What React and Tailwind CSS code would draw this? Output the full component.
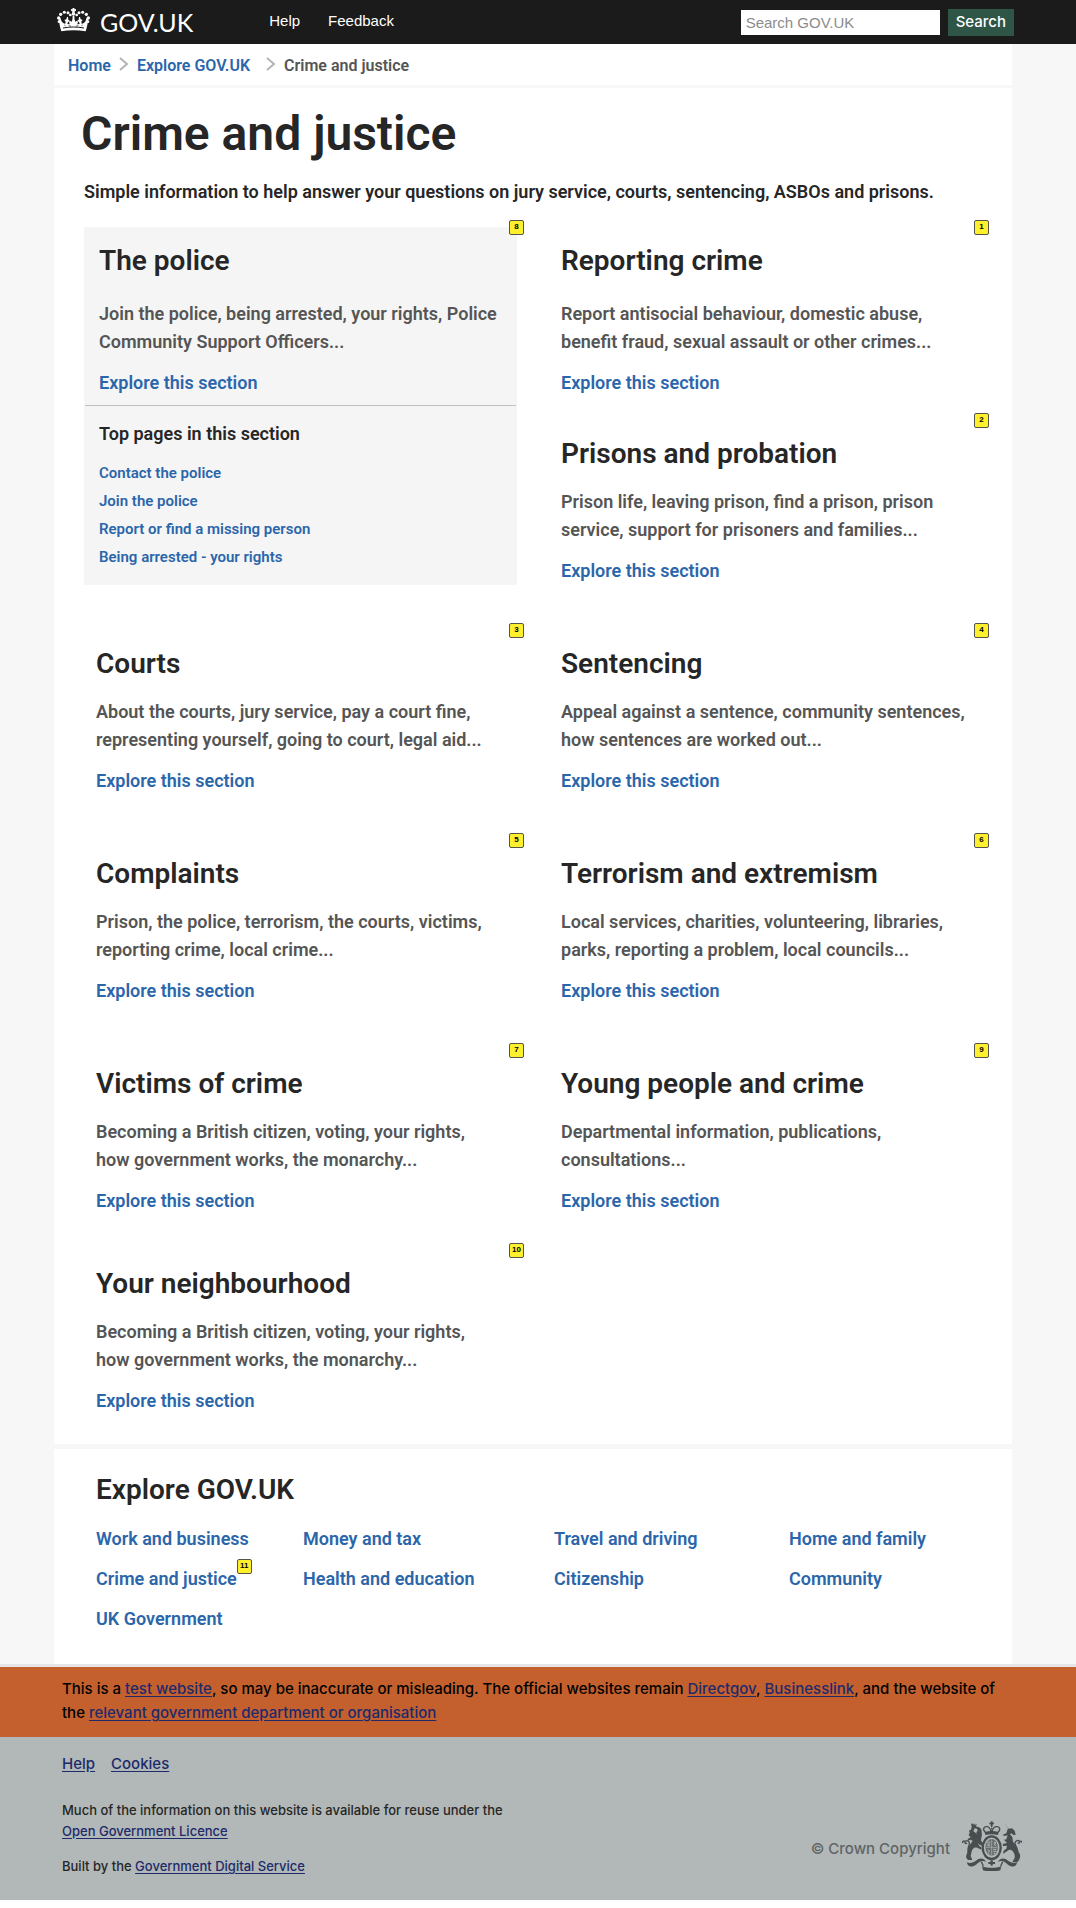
import React from "react";

const LINK = "text-[#2b66ab] hover:underline";
const FOOTER_LINK = "text-[#1d2a6b] underline underline-offset-2";

function Crown() {
  return (
    <svg className="h-6 w-[33px]" viewBox="0 0 99 72" fill="#fff" aria-hidden="true">
      <path d="M47 0h5l1 4 4-1v6l-4-1 1 6h-9l1-6-4 1V3l4 1z" />
      <circle cx="49.500" cy="18" r="5.500" />
      <circle cx="33" cy="14" r="4.500" />
      <circle cx="22" cy="12.500" r="4.500" />
      <circle cx="11" cy="19" r="5" />
      <circle cx="5" cy="30" r="5" />
      <circle cx="6" cy="41" r="4" />
      <circle cx="40" cy="21" r="4" />
      <circle cx="66" cy="14" r="4.500" />
      <circle cx="77" cy="12.500" r="4.500" />
      <circle cx="88" cy="19" r="5" />
      <circle cx="94" cy="30" r="5" />
      <circle cx="93" cy="41" r="4" />
      <circle cx="59" cy="21" r="4" />
      <path d="M47 24h5l1 12 3 6 3-4 4 4-2 7 7-1-2-6-6-3 5-4 1-8h3l2 7 6 2-4 5 1 6c6-1 9-4 12-9l3-9 4 3c0 13-3 25-7 38-23-4-50-4-73 0C9 57 6 45 6 32l4-3 3 9c3 5 6 8 12 9l1-6-4-5 6-2 2-7h3l1 8 5 4-6 3-2 6 7 1-2-7 4-4 3 4 3-6z" />
      <path d="M18 60c20-4 43-4 63 0" stroke="#1b1b1b" strokeWidth="3" fill="none" />
      <path d="M35 52l7 3M64 52l-7 3M22 51l4 3M77 51l-4 3" stroke="#1b1b1b" strokeWidth="2" />
    </svg>
  );
}

function RoyalArms() {
  return (
    <svg className="h-[50px] w-[60px]" viewBox="0 0 180 150" fill="#484d4f" aria-hidden="true">
      {/* central crown */}
      <path d="M86 1h6v4h4v5h-4v5h-6v-5h-4V5h4z" />
      <g fill="none" stroke="#484d4f" strokeWidth="4">
        <path d="M70 34C60 24 66 15 76 17c8 2 10 8 11 16M108 34c10-10 4-19-6-17-8 2-11 8-12 16" />
        <path d="M89 15v20" strokeDasharray="4 2" />
      </g>
      <path d="M68 33c14-4 28-4 42 0l-2 9c-12-3-26-3-38 0z" />
      {/* shield and garter */}
      <ellipse cx="89" cy="80" rx="27" ry="34" fill="none" stroke="#484d4f" strokeWidth="7" />
      <ellipse cx="89" cy="79" rx="19" ry="25" fill="#676c6d" />
      <path d="M89 55v48M71 79h36" stroke="#b2b8b7" strokeWidth="2" />
      <path d="M76 63h9M75 69h10M76 74h8M94 85h9M94 91h9M95 97h5M77 86l6 4-5 5 5 5M95 63l7 3-6 4 6 4" stroke="#b2b8b7" strokeWidth="3" fill="none" />
      {/* lion */}
      <path d="M27 12l3-6 4 5 3-4 2 5 5-3-2 9H30z" />
      <path d="M28 19c10-5 26-3 30 6 2 5 0 10 2 15l-3 17c3 9 7 10 11 9l-4 7c-8 2-13-1-15-7-1 6 4 10 8 13l2 7-7-3c-9-4-14-6-20 2-4 6-4 13-6 20l5 12h-13c-5-5-7-10-5-14 4-8 3-15 6-22 2-8 9-15 13-21l-6-4-8 3-1-5 9-5-6-6 3-8-2-6 7-4z" />
      <path d="M38 22l7 1 2 7-4 3 1 7-5-6-5-3z" fill="#b2b8b7" />
      <path d="M20 92C14 84 22 76 22 68c1-9-10-12-13-5-1 4 3 6 6 3M9 62C4 57 2 62 1 66" fill="none" stroke="#484d4f" strokeWidth="4" />
      {/* unicorn */}
      <path d="M125 4l15 19 10-1 8 7 3 12-5 2-8-6-4 3 7 8 2 14 10 13c7 9 4 15 10 23 4 8 0 17-7 26h-15l7-14c1-9-2-16-7-21-6-6-14-2-19 4l-9 5 2-9 8-6 2-9-12 1-1-6 13-3-9-10 7-1 4-12-8 2-8-3 12-5 5-15z" />
      <path d="M160 88c8-7-1-14-1-21 0-9 11-11 14-5 1 4-3 6-6 3M172 62c5-4 7 0 8 3" fill="none" stroke="#484d4f" strokeWidth="4" />
      {/* ribbon */}
      <path d="M14 124c10 5 22 1 34-9 10-6 20-2 24 7-14-5-21 2-30 9-8 6-16 8-24 2zM166 124c-10 5-22 1-34-9-10-6-20-2-24 7 14-5 21 2 30 9 8 6 16 8 24 2z" />
      <path d="M60 136c18 6 40 6 58 0l-3 12c-16 4-36 4-52 0z" />
      <path d="M58 122l6 14M122 122l-6 14" stroke="#484d4f" strokeWidth="4" />
      <path d="M86 118h6l1 5h6v6h-6l-2 5h-4l-2-5h-6v-6h6z" />
    </svg>
  );
}

function Badge({ children, className }) {
  return (
    <span
      className={`absolute flex size-[15px] justify-center rounded-[2px] border border-[#55534a] bg-[#fff02d] font-['Liberation_Sans',sans-serif] text-[8px] leading-[11px] font-bold text-black ${className}`}
    >
      {children}
    </span>
  );
}

function Card({ badge, title, text, roomy = false, indent = "px-3", className = "", children }) {
  return (
    <article className={`relative ${className}`}>
      <Badge className="-top-[7px] -right-[7px]">{badge}</Badge>
      <div className={`pt-[17px] ${indent}`}>
        <h2 className="text-[28px] leading-[34px] font-semibold text-[#262626]">{title}</h2>
        <p className={`text-lg leading-7 font-semibold text-[#555] ${roomy ? "mt-[22px]" : "mt-[17px]"}`}>{text}</p>
        <a href="#" className={`mt-[13px] block text-lg leading-7 font-semibold ${LINK}`}>
          Explore this section
        </a>
      </div>
      {children}
    </article>
  );
}

const TOP_PAGES = ["Contact the police", "Join the police", "Report or find a missing person", "Being arrested - your rights"];

const EXPLORE = [
  "Work and business", "Money and tax", "Travel and driving", "Home and family",
  "Crime and justice", "Health and education", "Citizenship", "Community",
  "UK Government",
];

function Chevron() {
  return (
    <svg className="h-[14px] w-[10px]" viewBox="0 0 10 14" fill="none" stroke="#b4b4b4" strokeWidth="2" aria-hidden="true">
      <path d="M1 1l7 6-7 6" />
    </svg>
  );
}

export default function App() {
  return (
    <div className="bg-white font-[Roboto,sans-serif]">
      <header className="flex h-11 items-center bg-[#1b1b1b] pr-[62px] pl-[57px] text-white">
        <a href="#" className="flex items-center gap-[10px] pb-1">
          <Crown />
          <span className="pt-[3px] font-[Lato,sans-serif] text-[25px] leading-7">GOV.UK</span>
        </a>
        <nav className="ml-[76px] flex gap-7 pb-[2px] font-['Liberation_Sans',sans-serif] text-[15px] leading-5">
          <a href="#">Help</a>
          <a href="#">Feedback</a>
        </nav>
        <form className="ml-auto flex items-center gap-2" onSubmit={(e) => e.preventDefault()}>
          <input
            type="search"
            aria-label="Search GOV.UK"
            placeholder="Search GOV.UK"
            className="h-[25px] w-[199px] bg-white px-[5px] font-['Liberation_Sans',sans-serif] text-[15px] text-black placeholder:text-[#8c8c8c]"
          />
          <button type="submit" className="h-[27px] bg-[#2e5546] px-2 font-[Inter,sans-serif] text-[15px] leading-5 font-medium">
            Search
          </button>
        </form>
      </header>

      <div className="bg-[#f7f7f7] pr-16 pl-[54px]">
        <nav aria-label="Breadcrumb" className="flex h-[41px] items-center bg-white px-[14px] pt-[2px] text-base font-semibold">
          <a href="#" className={LINK}>Home</a>
          <span className="mr-2 ml-2 pb-[3px]"><Chevron /></span>
          <a href="#" className={LINK}>Explore GOV.UK</a>
          <span className="mr-2 ml-4 pb-[3px]"><Chevron /></span>
          <span className="text-[#555]">Crime and justice</span>
        </nav>

        <main className="mt-[3px] bg-white px-[30px] pt-4 pb-[29px]">
          <h1 className="-ml-[3px] text-5xl leading-[60px] font-semibold text-[#262626]">Crime and justice</h1>
          <p className="mt-[14px] text-lg leading-7 font-semibold text-[#262626]">
            Simple information to help answer your questions on jury service, courts, sentencing, ASBOs and prisons.
          </p>

          <div className="mt-[21px] grid grid-cols-2 gap-x-8">
            <Card
              badge="8"
              title="The police"
              text="Join the police, being arrested, your rights, Police Community Support Officers..."
              roomy
              indent="pl-[15px] pr-2"
              className="row-span-2 self-start bg-[#f5f5f5]"
            >
              <div className="mx-px mt-2 border-t border-[#bfc1c3] px-[14px] pt-[14px] pb-[14px]">
                <h3 className="text-lg leading-7 font-semibold text-[#262626]">Top pages in this section</h3>
                <ul className="mt-[11px] text-[15px] leading-7 font-semibold">
                  {TOP_PAGES.map((page) => (
                    <li key={page}><a href="#" className={LINK}>{page}</a></li>
                  ))}
                </ul>
              </div>
            </Card>
            <Card badge="1" title="Reporting crime" text="Report antisocial behaviour, domestic abuse, benefit fraud, sexual assault or other crimes..." roomy className="pb-[23px]" />
            <Card badge="2" title="Prisons and probation" text="Prison life, leaving prison, find a prison, prison service, support for prisoners and families..." className="pb-[45px]" />
            <Card badge="3" title="Courts" text="About the courts, jury service, pay a court fine, representing yourself, going to court, legal aid..." className="pb-[45px]" />
            <Card badge="4" title="Sentencing" text="Appeal against a sentence, community sentences, how sentences are worked out..." className="pb-[45px]" />
            <Card badge="5" title="Complaints" text="Prison, the police, terrorism, the courts, victims, reporting crime, local crime..." className="pb-[45px]" />
            <Card badge="6" title="Terrorism and extremism" text="Local services, charities, volunteering, libraries, parks, reporting a problem, local councils..." className="pb-[45px]" />
            <Card badge="7" title="Victims of crime" text="Becoming a British citizen, voting, your rights, how government works, the monarchy..." indent="pl-3 pr-8" className="pb-[35px]" />
            <Card badge="9" title="Young people and crime" text="Departmental information, publications, consultations..." className="pb-[35px]" />
            <Card badge="10" title="Your neighbourhood" text="Becoming a British citizen, voting, your rights, how government works, the monarchy..." indent="pl-3 pr-8" />
          </div>
        </main>

        <section className="mt-[5px] bg-white pt-6 pr-[30px] pb-[31px] pl-[42px]">
          <h2 className="text-[28px] leading-[34px] font-semibold text-[#262626]">Explore GOV.UK</h2>
          <ul className="mt-[18px] grid grid-cols-[207fr_251fr_235fr_193fr] gap-y-3 text-lg leading-7 font-semibold">
            {EXPLORE.map((topic) => (
              <li key={topic}>
                <a href="#" className={`relative inline-block ${LINK}`}>
                  {topic}
                  {topic === "Crime and justice" && <Badge className="-top-[6px] left-full">11</Badge>}
                </a>
              </li>
            ))}
          </ul>
        </section>
      </div>

      <aside className="border-t-[3px] border-[#e6e6e6] bg-[#c4602e] pt-[10px] pr-16 pb-3 pl-[62px] font-[Inter,sans-serif] text-[15px] leading-6 font-medium text-black">
        <p>
          This is a <a href="#" className={FOOTER_LINK}>test website</a>, so may be inaccurate or misleading. The official
          websites remain <a href="#" className={FOOTER_LINK}>Directgov</a>, <a href="#" className={FOOTER_LINK}>Businesslink</a>,
          and the website of the <a href="#" className={FOOTER_LINK}>relevant government department or organisation</a>
        </p>
      </aside>

      <footer className="mb-2 flex items-end justify-between bg-[#b2b8b7] pt-[15px] pr-[54px] pb-[23px] pl-[62px] font-[Inter,sans-serif] text-[13px] leading-[21px] font-medium text-[#262626]">
        <div>
          <nav className="flex gap-4 text-[15px] leading-6">
            <a href="#" className={FOOTER_LINK}>Help</a>
            <a href="#" className={FOOTER_LINK}>Cookies</a>
          </nav>
          <p className="mt-6">
            Much of the information on this website is available for reuse under the
            <a href="#" className={`block ${FOOTER_LINK}`}>Open Government Licence</a>
          </p>
          <p className="mt-[14px]">
            Built by the <a href="#" className={FOOTER_LINK}>Government Digital Service</a>
          </p>
        </div>
        <div className="flex items-center gap-3 pb-[6px]">
          <span className="pt-1 text-[15px] text-[#5f6466]">© Crown Copyright</span>
          <RoyalArms />
        </div>
      </footer>
    </div>
  );
}
